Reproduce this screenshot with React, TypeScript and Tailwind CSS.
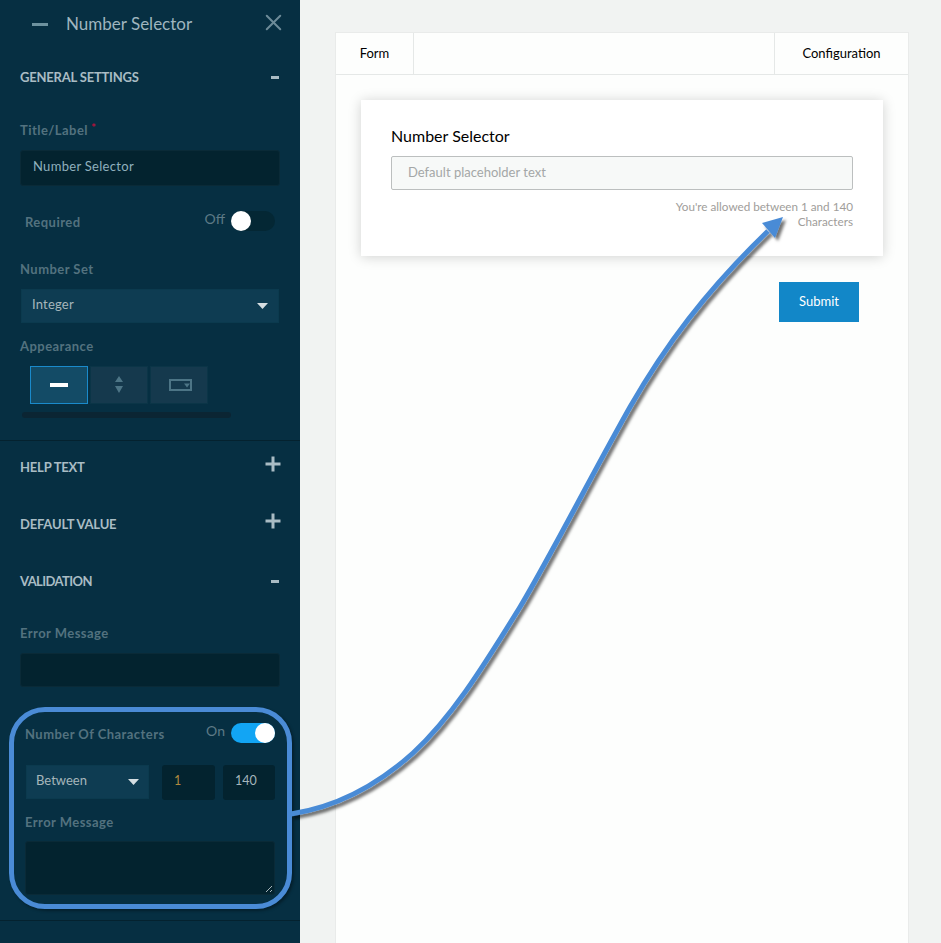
import { X } from "lucide-react";

const font = { fontFamily: "Lato, 'Open Sans', sans-serif" };

function SectionHead({ title, open, className }: { title: string; open?: boolean; className?: string }) {
  return (
    <div className={`flex items-center justify-between pl-5 pr-[20px] ${className ?? ""}`}>
      <span className={`text-[13px] font-bold text-[#a9bcc4] ${title === "VALIDATION" ? "tracking-[-0.6px]" : "tracking-[-0.2px]"}`}>{title}</span>
      {open ? (
        <span className="mr-px -mt-[2px] h-[3px] w-2 bg-[#a9bcc4]" />
      ) : (
        <svg width="16" height="16" viewBox="0 0 16 16" className="-mr-px -mt-[9px] fill-[#a9bcc4]">
          <path d="M6.500 0.500h3v6h6v3h-6v6h-3v-6h-6v-3h6z" />
        </svg>
      )}
    </div>
  );
}

function Label({ children, className }: { children: React.ReactNode; className?: string }) {
  return <div className={`text-[13px] font-bold leading-4 tracking-[0.45px] text-[#53727f] ${className ?? ""}`}>{children}</div>;
}

function Toggle({ on }: { on?: boolean }) {
  return (
    <div className="flex items-center">
      <span className="mr-[6px] -mt-[6px] text-[14px] text-[#5d7a86]">{on ? "On" : "Off"}</span>
      <div className={`flex h-5 w-11 items-center rounded-full ${on ? "justify-end bg-[#12a5f4]" : "justify-start bg-[#042734]"}`}>
        <div className="h-5 w-5 rounded-full bg-white" />
      </div>
    </div>
  );
}

function Caret() {
  return (
    <svg width="11" height="6" viewBox="0 0 11 6" className="fill-[#d5dee2]">
      <path d="M0 0h11L5.500 6z" />
    </svg>
  );
}

function Sidebar() {
  return (
    <aside className="h-[943px] w-[300px] shrink-0 bg-[#062f42]">
      <div className="flex h-[48px] items-center">
        <span className="ml-8 h-[3px] w-4 bg-[#6d929f]" />
        <span className="ml-[18px] text-[17px] text-[#9fb5bf]">Number Selector</span>
        <X className="ml-auto mr-[13px] -mt-1 text-[#6d8b98]" size={27} strokeWidth={1.8} />
      </div>

      <SectionHead title="GENERAL SETTINGS" open className="mt-[22px] h-4" />

      <div className="mt-[36px] px-5">
        <Label>
          Title/Label<span className="relative -top-[3px] ml-[3px] text-[12px] text-[#b3123c]">*</span>
        </Label>
        <div className="mt-[11px] flex h-9 items-center rounded-[3px] border border-[#0a2a37] bg-[#03232f] pb-[2px] pl-3 text-[13px] tracking-[0.3px] text-[#8fb0bd]">
          Number Selector
        </div>
      </div>

      <div className="mt-[25px] flex h-5 items-center justify-between pl-[25px] pr-[25px]">
        <Label className="mt-[2px]">Required</Label>
        <Toggle />
      </div>

      <div className="mt-[31px] px-5">
        <Label className="-translate-y-px">Number Set</Label>
        <div className="mx-px mt-[11px] flex h-[34px] items-center justify-between border border-[#0b3a4e] bg-[#0e3c52] pl-[10px] pr-[10px] text-[13px] tracking-[0.2px] text-[#a6b6bb]">
          <span className="-translate-y-px">Integer</span>
          <Caret />
        </div>
        <Label className="mt-4 -translate-y-px">Appearance</Label>
      </div>

      <div className="ml-[30px] mt-[11px] flex gap-[2px]">
        <div className="flex h-[38px] w-[58px] items-center justify-center border border-[#1a8acb] bg-[#134b66]">
          <span className="h-1 w-[18px] bg-white" />
        </div>
        <div className="flex h-[38px] w-[58px] items-center justify-center border border-[#0b3547] bg-[#15394d]">
          <svg width="10" height="20" viewBox="0 0 10 20" className="fill-[#4d7586]">
            <path d="M5 1l4 6H1zM1 11h8l-4 7z" />
          </svg>
        </div>
        <div className="flex h-[38px] w-[58px] items-center justify-center border border-[#0b3547] bg-[#15394d]">
          <svg width="24" height="13" viewBox="0 0 24 13" className="ml-1">
            <rect x="1" y="1" width="21" height="10" fill="none" stroke="#4d7586" strokeWidth="2" />
            <path d="M15 4.500h6l-3 4z" fill="#4d7586" />
          </svg>
        </div>
      </div>
      <div className="ml-[22px] mt-2 h-[6px] w-[209px] rounded-full bg-[#0b2533]" />

      <div className="mt-[22px] h-px bg-[#04222f]" />

      <SectionHead title="HELP TEXT" className="mt-[19px] h-4" />
      <SectionHead title="DEFAULT VALUE" className="mt-[41px] h-4" />
      <SectionHead title="VALIDATION" open className="mt-[41px] h-4" />

      <div className="mt-[36px] px-5">
        <Label className="-translate-y-px">Error Message</Label>
        <div className="mt-[11px] h-[34px] rounded-[3px] border border-[#0a2a37] bg-[#03232f]" />
      </div>

      <div className="mt-[36px] flex h-5 items-center justify-between px-[25px]">
        <Label className="mt-[2px]">Number Of Characters</Label>
        <Toggle on />
      </div>

      <div className="mt-[22px] flex pl-[26px] pr-[25px]">
        <div className="flex h-[34px] w-[123px] items-center justify-between border border-[#0b3a4e] bg-[#0e3c52] pl-[9px] pr-[9px] text-[13px] text-[#a6b6bb]">
          <span className="-translate-y-px">Between</span>
          <Caret />
        </div>
        <div className="ml-[13px] flex h-[35px] w-[53px] items-center rounded-[3px] bg-[#03232f] pb-[2px] pl-3 text-[12.5px] text-[#b0893f]">1</div>
        <div className="ml-2 flex h-[35px] w-[52px] items-center rounded-[3px] bg-[#03232f] pb-[2px] pl-3 text-[12.5px] text-[#a6b6bb]">140</div>
      </div>

      <div className="mt-[15px] px-[25px]">
        <Label className="-translate-y-px">Error Message</Label>
        <div className="relative mt-[10px] h-[54px] rounded-[3px] border border-[#0a2a37] bg-[#03232f]">
          <svg width="8" height="8" viewBox="0 0 8 8" className="absolute bottom-px right-px stroke-[#a5b4ba]">
            <path d="M1 7L7 1M5 7L7 5" />
          </svg>
        </div>
      </div>

      <div className="mt-[25px] h-px bg-[#04222f]" />
    </aside>
  );
}

function FormPanel() {
  return (
    <div className="mt-8 ml-[35px] h-[930px] w-[574px] shrink-0 border border-[#e9ebea] bg-[#fdfefd]">
      <div className="flex h-[42px] border-b border-[#e5e8e7] text-[13px]">
        <div className="flex w-[78px] items-center justify-center border-r border-[#e5e8e7] pt-px text-black">Form</div>
        <div className="ml-auto flex w-[134px] items-center justify-center border-l border-[#e5e8e7] text-black">Configuration</div>
      </div>

      <div className="ml-[25px] mt-[25px] h-[156px] w-[522px] bg-white px-[30px] pt-[26px] shadow-[0_1px_12px_rgba(0,0,0,0.18)]">
        <div className="text-[16px] leading-5 text-black">Number Selector</div>
        <div className="mt-[10px] flex h-[34px] items-center rounded-[2px] border border-[#bcbfbf] bg-[#f7f9f8] pl-4 text-[13px] text-[#a4a7a7]">
          Default placeholder text
        </div>
        <div className="mt-[9px] text-right text-[11.7px] leading-[15px] text-[#a09d9a]">
          You're allowed between 1 and 140
          <br />
          Characters
        </div>
      </div>

      <div className="mr-[49px] mt-[26px] flex justify-end">
        <div className="flex h-10 w-20 items-center justify-center bg-[#1287c8] text-[13px] text-white">Submit</div>
      </div>
    </div>
  );
}

function Annotation() {
  return (
    <>
      <div className="absolute left-[9px] top-[707px] h-[202px] w-[283px] rounded-[36px] border-[5px] border-[#4a8bd6] shadow-[2px_2px_3px_rgba(0,0,0,0.35)]" />
      <svg className="absolute left-0 top-0" width="941" height="943" viewBox="0 0 941 943">
        <defs>
          <filter id="arrowShadow" x="-10%" y="-10%" width="120%" height="120%">
            <feDropShadow dx="3" dy="3" stdDeviation="1.800" floodColor="#000" floodOpacity="0.55" />
          </filter>
        </defs>
        <g filter="url(#arrowShadow)">
          <path
            d="M291 814C330 808 372 790 413 753C450 719 480 672 520 607C550 557 590 478 630 407C665 346 705 292 768 231"
            fill="none"
            stroke="#4a8bd6"
            strokeWidth="5"
          />
          <path d="M783 217L762 223L775 238z" fill="#4a8bd6" />
        </g>
      </svg>
    </>
  );
}

export default function App() {
  return (
    <div className="relative flex h-[943px] w-[941px] overflow-hidden bg-[#f1f3f2]" style={font}>
      <Sidebar />
      <FormPanel />
      <Annotation />
    </div>
  );
}
